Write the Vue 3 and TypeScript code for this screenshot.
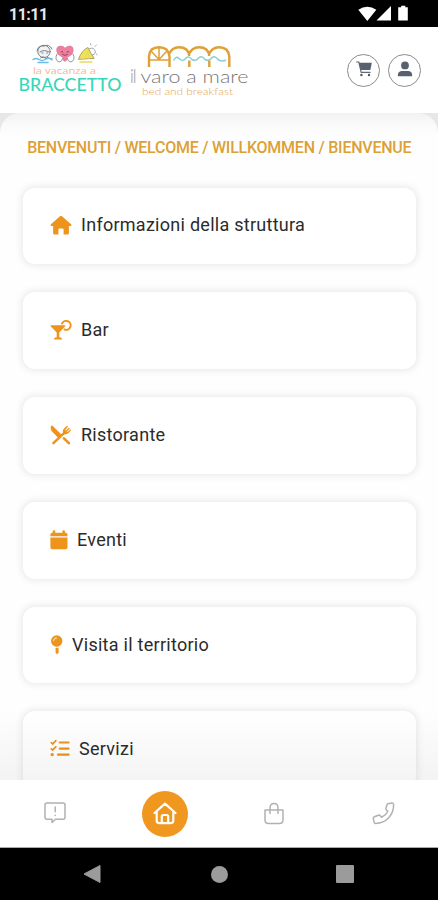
<script setup lang="ts">
interface Shape {
  d: string
  stroke?: number
  fill?: string
}
interface MenuItem {
  id: string
  label: string
  width: number
  shapes: Shape[]
}

const ORANGE = '#ee931b'

const items: MenuItem[] = [
  {
    id: 'info',
    label: 'Informazioni della struttura',
    width: 22,
    shapes: [
      { d: 'M11 .8 Q11.5 .8 12 1.2 L21.3 9.4 Q22 10.8 20.6 11 H18.9 V18 Q18.9 19.6 17.3 19.6 H13.6 V14.6 Q13.6 13.4 12.4 13.4 H9.6 Q8.4 13.4 8.4 14.6 V19.6 H4.7 Q3.1 19.6 3.1 18 V11 H1.4 Q0 10.8 .7 9.4 L10 1.2 Q10.5 .8 11 .8 Z' },
    ],
  },
  {
    id: 'bar',
    label: 'Bar',
    width: 22,
    shapes: [
      { d: 'M1.2 5.2 H14.6 Q15.8 5.6 15 6.6 L9.3 12.4 V17.6 H10.8 Q12.2 18.2 12 19.6 H4 Q3.8 18.2 5.2 17.6 H6.7 V12.4 L.8 6.6 Q0 5.6 1.2 5.2 Z' },
      { d: 'M12 3.6 A4.5 4.5 0 1 1 14.4 9.5', stroke: 1.9, fill: 'none' },
    ],
  },
  {
    id: 'restaurant',
    label: 'Ristorante',
    width: 22,
    shapes: [
      { d: 'M1.2 .8 Q2.2 .3 3 1.2 L12.2 10.3 L9.6 12.6 Q8.3 13.1 7.3 12 L4 8.6 Q-.8 4.4 1.2 .8 Z' },
      { d: 'M14 13.3 L18.8 18.2', stroke: 2.6, fill: 'none' },
      { d: 'M3.4 18.2 L14.3 7.8', stroke: 2.5, fill: 'none' },
      { d: 'M17.1 .7 L13.5 4 Q11.9 6.2 13.3 8.4 Q15.6 10.2 18 8.6 L21.2 5.2 L20.4 4.4 L17.3 7.2 L16.8 6.7 L19.9 3.5 L19 2.6 L15.8 5.7 L15.2 5.1 L18 1.7 Z' },
    ],
  },
  {
    id: 'events',
    label: 'Eventi',
    width: 18,
    shapes: [
      { d: 'M4 .3 Q5.3 .3 5.3 1.6 V2.7 H12.4 V1.6 Q12.4 .3 13.7 .3 Q15 .3 15 1.6 V2.7 H15.5 Q17.5 2.7 17.5 4.6 V6.3 H.4 V4.6 Q.4 2.7 2.4 2.7 H2.7 V1.6 Q2.7 .3 4 .3 Z M.4 7.6 H17.5 V17.4 Q17.5 19.2 15.6 19.2 H2.3 Q.4 19.2 .4 17.4 Z' },
    ],
  },
  {
    id: 'territory',
    label: 'Visita il territorio',
    width: 13,
    shapes: [
      { d: 'M6.7 .3 A5.7 5.7 0 1 1 6.7 11.7 A5.7 5.7 0 1 1 6.7 .3 Z' },
      { d: 'M3.7 5.7 Q3.9 3.2 6.5 3', stroke: 1.1, fill: 'none' },
      { d: 'M5.6 12.7 H8.6 V17.6 L7.1 19.4 L5.6 17.6 Z' },
    ],
  },
  {
    id: 'services',
    label: 'Servizi',
    width: 20,
    shapes: [
      { d: 'M1.3 3.7 L2.7 5 L5.8 1.6 M1.3 9.8 L2.7 11.1 L5.8 7.7', stroke: 1.7, fill: 'none' },
      { d: 'M9.8 3.5 H18.6 M9.8 9.6 H18.6 M8 15.7 H18.6', stroke: 2.2, fill: 'none' },
      { d: 'M2.2 13.9 A1.7 1.7 0 1 1 2.2 17.3 A1.7 1.7 0 1 1 2.2 13.9 Z' },
    ],
  },
]

function strokeOf(item: MenuItem, index: number): string {
  if (!item.shapes[index].stroke) return 'none'
  return item.id === 'territory' ? '#fbdcae' : ORANGE
}
</script>

<template>
  <div class="screen">
    <div class="status">
      <span class="clock">11:11</span>
      <svg class="signals" width="52" height="18" viewBox="0 0 52 18" fill="#fff">
        <path d="M.3 4.8 Q9.3 -1.4 18.3 4.8 L9.3 16 Z" />
        <path d="M33 1 V15.500 H18.500 Z" />
        <path d="M43.200 .8 H47.300 V2.300 H49.800 V15.500 H40.200 V2.300 H43.200 Z" />
      </svg>
    </div>

    <header class="header">
      <svg class="logos" width="236" height="60" viewBox="0 0 236 60">
        <g fill="none" stroke-linecap="round" stroke-width="1">
          <g stroke="#7b8088">
            <circle cx="26" cy="9.500" r="6.200" fill="#f1f2f3" />
            <path d="M19 9 Q20 3 26 4 Q31 1.500 34 7 M22 10 Q26 7 31 10 M22.500 16 Q26 13 28 17 M29 15 L34 18 M24 11 H25 M28.500 11 H29.500" />
          </g>
          <path d="M15 17.500 Q18 15.500 21 17.500 T27 17.500 T34 17 M20 20.500 H30" stroke="#6dbbe8" stroke-width="1.500" />
          <path d="M47 19 C38 12 37 5.500 42 4.500 Q45.500 4 47 7 Q49 4 52.500 4.500 C57 6 55 13 47 19 Z" fill="#ef7f9f" stroke="#e97d9c" stroke-width="1.500" />
          <path d="M43 10 Q44 8.500 45 10 M49 10 Q50 8.500 51 10 M44.500 12.500 Q47 14.500 49.500 12.500" stroke="#8a4a60" />
          <path d="M39 12 Q36 18 41 20 Q44 20 45 16 M55 12 Q58 18 53 20 Q50 20 49 16" fill="#fff" stroke="#999" />
          <path d="M60.500 17 Q64 8 70 5.500 Q73 12 76 16 Z" fill="#f3e34e" stroke="#aaa565" />
          <path d="M62 20 H74 M66 17 L70 9 L71 16" stroke="#e7dc62" stroke-width="1.500" />
          <path d="M71 7 Q76 4 77.500 10 Q77 13 74 13 M73 3 L72.500 1.500 M77 4.500 L78.500 3 M78.500 12 L79 13" stroke="#aaa" />
        </g>
        <text class="script" x="15" y="32" textLength="63" lengthAdjust="spacingAndGlyphs">la vacanza a</text>
        <text class="braccetto" x=".5" y="49" textLength="103" lengthAdjust="spacingAndGlyphs">BRACCETTO</text>

        <path d="M155.500 18.500 Q158 13.500 161 16.500 Q165 20.500 168 16 Q171 13.500 174 17.500 Q178 20 181 15.500 Q184 13.500 187 17.500 Q191 20 194 15.500 Q197 13.500 200 17.500 Q204 20 208 18" fill="none" stroke="#8bd0d3" stroke-width="1.500" />
        <g fill="none" stroke="#dfa035" stroke-width="2.400">
          <path d="M131 25 V14.500 Q131.500 5.200 141 5.200 Q150.500 5.200 151.500 14.500 V25" />
          <path d="M151 12 Q154 5.200 161 5.200 Q170.500 5.200 171.300 14 M171 12 Q174 5.200 181 5.200 Q190.500 5.200 191.300 14 M191 12 Q194 5.200 201 5.200 Q210.500 5.200 211.300 14.500 V25 M171.300 18.500 V25 M191.300 18.500 V25" />
          <path d="M131 18 H151 M141 6 V17.500 M133.500 9.500 L141 17.500 L148.500 9.500" stroke-width="1.500" />
        </g>
        <text class="il" x="112.500" y="40.500" textLength="5.500" lengthAdjust="spacingAndGlyphs">il</text>
        <text class="varo" x="122.500" y="40.500" textLength="108" lengthAdjust="spacingAndGlyphs">varo a mare</text>
        <text class="bed" x="124" y="53" textLength="91" lengthAdjust="spacingAndGlyphs">bed and breakfast</text>
      </svg>

      <div class="actions">
        <button class="round" aria-label="Carrello">
          <svg width="16" height="16" viewBox="0 0 16 16">
            <path d="M.6 1 H2.800 L5.200 11.400 H14" fill="none" stroke="#626976" stroke-width="1.200" stroke-linecap="round" />
            <path d="M3 1.800 H15.800 L14.400 8.900 H4.700 Z" fill="#59616e" />
            <circle cx="5.400" cy="14" r="1.200" fill="#4f5662" />
            <circle cx="13" cy="14" r="1.200" fill="#4f5662" />
          </svg>
        </button>
        <button class="round" aria-label="Profilo">
          <svg width="16" height="16" viewBox="0 0 16 16" fill="#59616e">
            <circle cx="8" cy="4.400" r="3.900" />
            <path d="M.9 15.200 V13.600 Q1.200 10 5 9.900 H11 Q14.800 10 15.100 13.600 V15.200 Z" />
          </svg>
        </button>
      </div>
    </header>

    <main class="content">
      <div class="sheet">
        <h1 class="welcome">BENVENUTI / WELCOME / WILLKOMMEN / BIENVENUE</h1>
        <ul class="menu">
          <li v-for="item in items" :key="item.id" class="card">
            <svg :width="item.width" height="20" :viewBox="`0 0 ${item.width} 20`">
              <path
                v-for="(shape, i) in item.shapes"
                :key="i"
                :d="shape.d"
                :fill="shape.fill ?? (shape.stroke ? 'none' : ORANGE)"
                :stroke="strokeOf(item, i)"
                :stroke-width="shape.stroke ?? 0"
                stroke-linecap="round"
              />
            </svg>
            <span :class="['label', item.id]">{{ item.label }}</span>
          </li>
        </ul>
      </div>
      <div class="fade"></div>
    </main>

    <nav class="tabs">
      <a class="tab">
        <svg width="24" height="24" viewBox="0 0 24 24" fill="none" stroke="#b1b1b1" stroke-width="1.500" stroke-linejoin="round" stroke-linecap="round">
          <path d="M4 1 H20 Q22 1 22 3 V15.200 Q22 17.200 20 17.200 H12.500 L9 20.500 V17.200 H4 Q2 17.200 2 15.200 V3 Q2 1 4 1 Z M12.200 5 V9.800 M12.200 13.200 V13.400" />
        </svg>
      </a>
      <a class="tab">
        <span class="active">
          <svg width="24" height="24" viewBox="0 0 24 24" fill="none" stroke="#fff" stroke-width="2.200" stroke-linejoin="round" stroke-linecap="round">
            <path d="M1.500 11 L12 1.600 L22.500 11 M3.700 9.500 V18.500 Q3.700 21.200 6.400 21.200 H17.600 Q20.300 21.200 20.300 18.500 V9.500 M8.800 20.500 V14.500 Q8.800 13 10.300 13 H13.700 Q15.200 13 15.200 14.500 V20.500" />
          </svg>
        </span>
      </a>
      <a class="tab">
        <svg width="24" height="24" viewBox="0 0 24 24" fill="none" stroke="#b1b1b1" stroke-width="1.500" stroke-linejoin="round" stroke-linecap="round">
          <path d="M3 8 H21 V18 Q21 21.500 17.500 21.500 H6.500 Q3 21.500 3 18 Z M8 11.500 V5.500 Q8.300 1.500 12 1.500 Q15.700 1.500 16 5.500 V11.500" />
        </svg>
      </a>
      <a class="tab">
        <svg width="24" height="24" viewBox="0 0 24 24" fill="none" stroke="#b1b1b1" stroke-width="1.500" stroke-linejoin="round">
          <path d="M17 1.800 L20.900 1 Q22.500 .8 22.600 2.300 C22.900 13 15.400 21 4.600 21.500 Q3.400 21.400 3.100 20.200 L2.300 16.500 Q2.200 15.300 3.300 14.800 L7.500 13.200 Q8.600 12.900 9.300 13.700 L10.600 15.400 Q15.100 13.200 16.900 9.300 L15.300 7.800 Q14.600 7 15 6 L16 2.700 Q16.300 2 17 1.800 Z" />
        </svg>
      </a>
    </nav>

    <div class="system">
      <svg width="18" height="20" viewBox="0 0 18 20"><path d="M17 1.500 V18.500 L1 10 Z" fill="#9b9b9b" stroke="#9b9b9b" stroke-linejoin="round" /></svg>
      <span class="dot"></span>
      <span class="square"></span>
    </div>
  </div>
</template>

<style>
body {
  margin: 0;
  background: #fff;
}
</style>

<style scoped>
.screen {
  width: 438px;
  height: 900px;
  display: flex;
  flex-direction: column;
  overflow: hidden;
  font-family: Roboto, "Liberation Sans", sans-serif;
  background: #fff;
}
.status {
  height: 27px;
  flex: none;
  box-sizing: border-box;
  padding: 1px 28px 0 9px;
  display: flex;
  align-items: center;
  justify-content: space-between;
  background: #000;
}
.clock {
  color: #e8e8e8;
  font-size: 16px;
  font-weight: 700;
  letter-spacing: -0.5px;
}
.signals {
  margin-top: -1px;
}
.header {
  height: 86px;
  flex: none;
  box-sizing: border-box;
  padding: 0 17px 0 18px;
  display: flex;
  align-items: center;
  justify-content: space-between;
  background: #fff;
}
.logos {
  margin-top: 3px;
}
.script {
  font: 9px "Open Sans", sans-serif;
  fill: #f5b893;
}
.braccetto {
  font: 500 17.5px Lato, sans-serif;
  fill: #38d7ba;
}
.il {
  font: 20px Lato, sans-serif;
  fill: #aaa;
}
.varo {
  font: 300 18px Lato, sans-serif;
  fill: #777;
}
.bed {
  font: 300 10px Lato, sans-serif;
  fill: #e2a75a;
}
.actions {
  display: flex;
  gap: 8px;
}
.round {
  width: 33px;
  height: 33px;
  padding: 0;
  border: 1px solid #8b8b8b;
  border-radius: 50%;
  background: #fff;
  display: flex;
  align-items: center;
  justify-content: center;
}
.round svg {
  margin-top: -2px;
}
.content {
  height: 667px;
  flex: none;
  position: relative;
  overflow: hidden;
  background: #e7e7e7;
}
.sheet {
  box-sizing: border-box;
  height: 760px;
  padding: 24px 22.5px 0 23px;
  border-radius: 20px 20px 0 0;
  background: linear-gradient(#f2f2f2, #fafafa 12px, #fefefe 24px);
}
.welcome {
  margin: 0;
  height: 20px;
  line-height: 21px;
  font-size: 16px;
  font-weight: 500;
  letter-spacing: -0.24px;
  text-align: center;
  white-space: nowrap;
  color: #dca136;
}
.menu {
  list-style: none;
  margin: 30.5px 0 0;
  padding: 0;
  display: flex;
  flex-direction: column;
  gap: 28px;
}
.card {
  box-sizing: border-box;
  height: 76.8px;
  padding: 0 27px 1px;
  display: flex;
  align-items: center;
  gap: 9px;
  border-radius: 12px;
  background: #fff;
  box-shadow: 0 0 7px 2px rgba(0, 0, 0, 0.08);
}
.label {
  font-size: 18px;
  line-height: 24px;
  letter-spacing: 0.27px;
  color: #2b2b2b;
  white-space: nowrap;
}
.fade {
  position: absolute;
  left: 0;
  right: 0;
  bottom: 0;
  height: 70px;
  background: linear-gradient(rgba(0, 0, 0, 0), rgba(0, 0, 0, 0.045));
}
.tabs {
  height: 68px;
  flex: none;
  box-sizing: border-box;
  border-bottom: 1px solid #aaa;
  display: grid;
  grid-template-columns: repeat(4, 1fr);
  align-items: center;
  background: #fff;
}
.tab {
  display: flex;
  justify-content: center;
}
.active {
  width: 46px;
  height: 46px;
  margin-left: 1px;
  border-radius: 50%;
  background: #ef971e;
  display: flex;
  align-items: center;
  justify-content: center;
}
.system {
  flex: 1;
  padding: 0 84px 0 83px;
  display: flex;
  align-items: center;
  justify-content: space-between;
  background: #000;
}
.dot {
  width: 17px;
  height: 17px;
  margin-left: 1px;
  border-radius: 50%;
  background: #9b9b9b;
}
.square {
  width: 18px;
  height: 18px;
  border-radius: 1px;
  background: #9b9b9b;
}
</style>
